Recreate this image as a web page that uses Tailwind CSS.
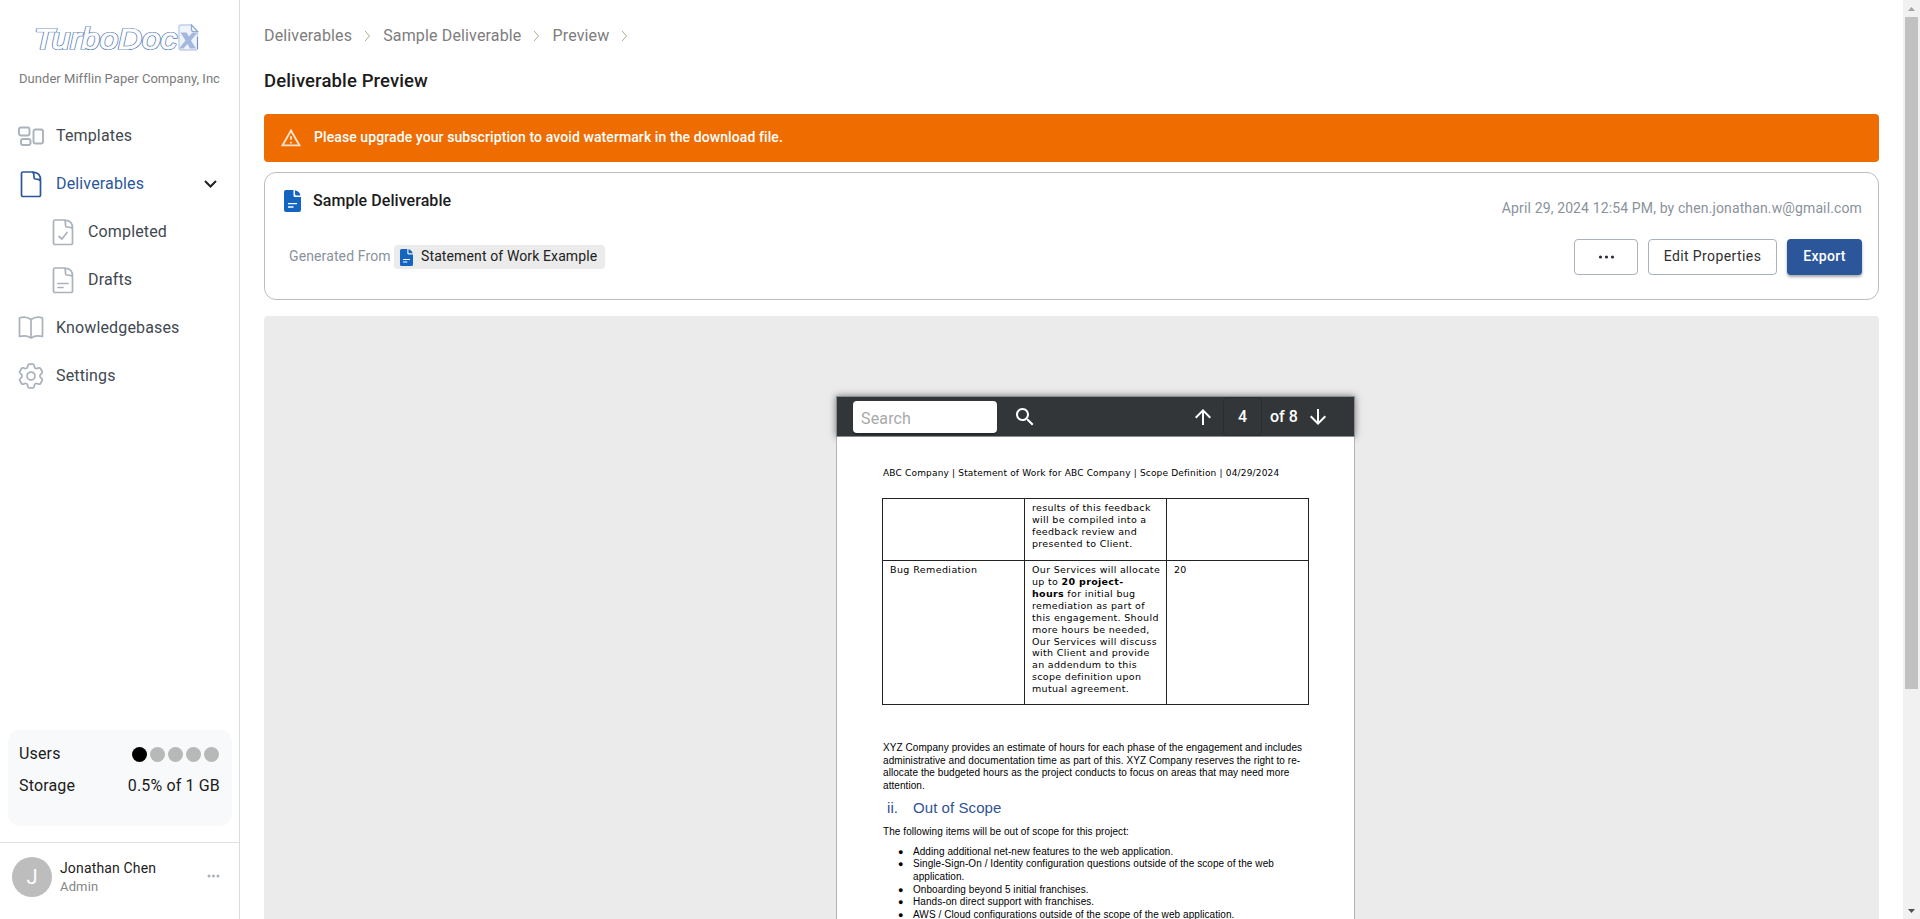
<!DOCTYPE html>
<html lang="en">
<head>
<meta charset="utf-8">
<title>Deliverable Preview</title>
<script src="https://cdn.jsdelivr.net/npm/@tailwindcss/browser@4"></script>
</head>
<body class="flex h-[919px] w-[1920px] overflow-hidden bg-white font-['Roboto',sans-serif] text-base tracking-[0.15px] text-[#1c1c1c]">

<!-- Sidebar -->
<aside class="flex w-60 shrink-0 flex-col border-r border-[#dcdcdc]">
  <div class="flex h-[60px] pt-[18px] pl-[34px]">
    <svg width="168" height="38" viewBox="0 0 168 38" fill="none">
      <text x="0" y="31" textLength="143" lengthAdjust="spacingAndGlyphs" font-family="Liberation Sans, sans-serif" font-style="italic" font-size="30" letter-spacing="0" fill="#fff" stroke="#4a72b4" stroke-width="2.2" stroke-linejoin="round">TurboDoc</text>
      <text x="0" y="31" textLength="143" lengthAdjust="spacingAndGlyphs" font-family="Liberation Sans, sans-serif" font-style="italic" font-size="30" letter-spacing="0" fill="#fff" stroke="#fff" stroke-width=".8">TurboDoc</text>
      <path d="M147 7h10.500l6 6.500V30a2 2 0 0 1-2 2H147a2 2 0 0 1-2-2V9a2 2 0 0 1 2-2z" fill="#eff3fa" stroke="#c3d0e8" stroke-width="1.400"/>
      <path d="M157.500 7v4.500a2 2 0 0 0 2 2h4z" fill="#fff" stroke="#8fa9d3" stroke-width="1.200"/>
      <path d="M146.500 14.500h6l2.500 4 3.500-4h5l-6.500 8 5 8h-6l-2.500-4.500-4 4.500h-4.500l6.500-8z" fill="#a3b8dc"/>
      <path d="M163.500 19v12" stroke="#6f8fc6"/>
    </svg>
  </div>
  <div class="mt-[9px] text-center text-[13px] leading-[20px] tracking-[0.04px] text-[#7b7b7b]">Dunder Mifflin Paper Company, Inc</div>

  <nav class="mt-[23px] flex flex-col text-[#424850]">
    <a class="flex h-12 items-center pl-[18px]">
      <svg class="mr-3 w-[26px]" width="26" height="22" viewBox="0 0 26 22" fill="none" stroke="#aab2bb" stroke-width="1.900"><rect x="1" y="2.500" width="10.500" height="8" rx="2"/><rect x="3" y="14" width="9.500" height="6" rx="2"/><rect x="15.500" y="4.500" width="9.500" height="14" rx="2"/></svg>
      Templates
    </a>
    <a class="flex h-12 items-center pl-5 text-[#2b579a]">
      <svg class="mr-[14px]" width="22" height="28" viewBox="0 0 22 28" fill="none" stroke="#2b579a" stroke-width="1.700" stroke-linejoin="round"><path d="M3 2h9.500q8.500.5 8 8.500V25a1.500 1.500 0 0 1-1.500 1.500H3A1.500 1.500 0 0 1 1.500 25V3.500A1.500 1.500 0 0 1 3 2zM12.500 2q1.500 1 1.500 4v1.500a1.500 1.500 0 0 0 1.500 1.500q4 0 5 2"/></svg>
      Deliverables
      <svg class="mr-[22px] ml-auto" width="13" height="8" viewBox="0 0 13 8" fill="none" stroke="#222" stroke-width="2"><path d="M1 1l5.500 5.500L12 1"/></svg>
    </a>
    <a class="flex h-12 items-center pl-[52px]">
      <svg class="mr-[14px]" width="22" height="28" viewBox="0 0 22 28" fill="none" stroke="#aab2bb" stroke-width="1.700" stroke-linejoin="round" stroke-linecap="round"><path d="M3 2h9.500q8.500.5 8 8.500V25a1.500 1.500 0 0 1-1.500 1.500H3A1.500 1.500 0 0 1 1.500 25V3.500A1.500 1.500 0 0 1 3 2zM12.500 2q1 1 1 4v1.500a1.500 1.500 0 0 0 1.500 1.500q4.500 0 5.500 2M7 18.500l3 2.500 5-6.500"/></svg>
      Completed
    </a>
    <a class="flex h-12 items-center pl-[52px]">
      <svg class="mr-[14px]" width="22" height="28" viewBox="0 0 22 28" fill="none" stroke="#aab2bb" stroke-width="1.700" stroke-linejoin="round" stroke-linecap="round"><path d="M3 2h9.500q8.500.5 8 8.500V25a1.500 1.500 0 0 1-1.500 1.500H3A1.500 1.500 0 0 1 1.500 25V3.500A1.500 1.500 0 0 1 3 2zM12.500 2q1 1 1 4v1.500a1.500 1.500 0 0 0 1.500 1.500q4.500 0 5.500 2M6 17.500h10M6 21.500h5"/></svg>
      Drafts
    </a>
    <a class="flex h-12 items-center pl-[18px]">
      <svg class="mr-3" width="26" height="24" viewBox="0 0 26 24" fill="none" stroke="#aab2bb" stroke-width="1.700" stroke-linejoin="round"><path d="M13 3.500Q7.500-.5 1.500 2v18.500Q8 18.500 13 22q5-3.500 11.500-1.500V2Q18.500-.5 13 3.500zV22"/></svg>
      Knowledgebases
    </a>
    <a class="flex h-12 items-center pl-[18px]">
      <svg class="mr-3" width="26" height="26" viewBox="2.200 2.200 19.600 19.600" fill="none" stroke="#aab2bb" stroke-width="1.300" stroke-linejoin="round" stroke-linecap="round"><path d="M9.594 3.940c.09-.542.56-.94 1.110-.94h2.593c.55 0 1.020.398 1.110.94l.213 1.281c.063.374.313.686.645.87.074.04.147.083.22.127.325.196.72.257 1.075.124l1.217-.456a1.125 1.125 0 0 1 1.370.49l1.296 2.247a1.125 1.125 0 0 1-.26 1.431l-1.003.827c-.293.241-.438.613-.43.992a7.723 7.723 0 0 1 0 .255c-.008.378.137.75.43.991l1.004.827c.424.35.534.955.26 1.430l-1.298 2.247a1.125 1.125 0 0 1-1.369.491l-1.217-.456c-.355-.133-.75-.072-1.076.124a6.470 6.470 0 0 1-.22.128c-.331.183-.581.495-.644.869l-.213 1.281c-.09.543-.56.94-1.110.94h-2.594c-.55 0-1.019-.398-1.110-.94l-.213-1.281c-.062-.374-.312-.686-.644-.87a6.520 6.520 0 0 1-.22-.127c-.325-.196-.72-.257-1.076-.124l-1.217.456a1.125 1.125 0 0 1-1.369-.49l-1.297-2.247a1.125 1.125 0 0 1 .26-1.431l1.004-.827c.292-.24.437-.613.43-.991a6.932 6.932 0 0 1 0-.255c.007-.38-.138-.751-.43-.992l-1.004-.827a1.125 1.125 0 0 1-.26-1.430l1.297-2.247a1.125 1.125 0 0 1 1.370-.491l1.216.456c.356.133.751.072 1.076-.124.072-.044.146-.086.22-.128.332-.183.582-.495.644-.869l.214-1.280Z"/><circle cx="12" cy="12" r="3"/></svg>
      Settings
    </a>
  </nav>

  <section class="mr-[7px] mt-auto ml-2 h-24 rounded-xl bg-[#f8f9fb] px-3 pt-2">
    <div class="-ml-px flex h-8 items-center justify-between">Users
      <div class="flex gap-[3px] pr-px">
        <i class="size-[15px] rounded-full bg-black"></i><i class="size-[15px] rounded-full bg-[#b7b8b8]"></i><i class="size-[15px] rounded-full bg-[#b7b8b8]"></i><i class="size-[15px] rounded-full bg-[#b7b8b8]"></i><i class="size-[15px] rounded-full bg-[#b7b8b8]"></i>
      </div>
    </div>
    <div class="-ml-px flex h-8 items-center justify-between">Storage<span>0.5% of 1 GB</span></div>
  </section>

  <footer class="mt-4 flex h-[77px] items-start border-t border-[#e0e0e0] pt-[14px] pl-3">
    <div class="flex size-10 items-center justify-center rounded-full bg-[#bdbdbd] text-xl text-white">J</div>
    <div class="ml-2 pt-px">
      <div class="text-sm leading-5">Jonathan Chen</div>
      <div class="text-[13px] leading-[17px] text-[#868686]">Admin</div>
    </div>
    <svg class="mt-[17px] mr-[19px] ml-auto" width="13" height="4" viewBox="0 0 13 4" fill="#aab2bb"><circle cx="2" cy="2" r="1.500"/><circle cx="6.500" cy="2" r="1.500"/><circle cx="11" cy="2" r="1.500"/></svg>
  </footer>
</aside>

<!-- Content -->
<main class="flex min-w-0 flex-1 flex-col px-6 pt-6">
  <div class="flex h-6 items-center text-[#7d7d7d]">
    <span>Deliverables</span>
    <svg class="mx-3" width="7" height="12" viewBox="0 0 7 12" fill="none" stroke="#a9ad8c"><path d="M1 1l4.500 5L1 11"/></svg>
    <span>Sample Deliverable</span>
    <svg class="mx-3" width="7" height="12" viewBox="0 0 7 12" fill="none" stroke="#a9ad8c"><path d="M1 1l4.500 5L1 11"/></svg>
    <span>Preview</span>
    <svg class="mx-3" width="7" height="12" viewBox="0 0 7 12" fill="none" stroke="#a9ad8c"><path d="M1 1l4.500 5L1 11"/></svg>
  </div>
  <h1 class="mt-[21px] text-[18.500px] leading-6 font-medium tracking-[0.12px]">Deliverable Preview</h1>

  <div class="mt-[21px] flex h-12 items-center rounded bg-[#ef6c00] pl-4 text-sm font-medium text-white">
    <svg class="mr-3" width="22" height="22" viewBox="0 0 24 24" fill="#fbe3cf"><path d="M12 5.990L19.530 19H4.470L12 5.990M12 2L1 21h22L12 2zm1 14h-2v2h2v-2zm0-6h-2v4h2v-4z"/></svg>
    <span class="pb-[2px] tracking-[0.09px]">Please upgrade your subscription to avoid watermark in the download file.</span>
  </div>

  <section class="mt-[10px] flex h-32 shrink-0 justify-between rounded-xl border border-[#bdbdbd] pr-4">
    <div class="pt-4 pl-[19px]">
      <div class="flex h-6 items-center font-medium tracking-[0.06px]">
        <svg class="mr-3" width="17" height="22" viewBox="0 0 17 22"><path d="M2 0h7.500v5.500a1.500 1.500 0 0 0 1.500 1.500h6v13a2 2 0 0 1-2 2H2a2 2 0 0 1-2-2V2a2 2 0 0 1 2-2z" fill="#1565c0"/><path d="M11 .2q4.500 1 5.500 5.300h-4q-1.500 0-1.500-1.500z" fill="#1565c0"/><path d="M4 13.700h9M4 17h5.500" stroke="#fff" stroke-width="1.300"/></svg>
        Sample Deliverable
      </div>
      <div class="mt-8 flex h-6 items-center pl-[5px] text-sm text-[#8a929c]">
        <span class="w-[105px] pb-[2px] tracking-[0.12px]">Generated From</span>
        <span class="flex h-6 w-[211px] items-center rounded bg-[#ebebeb] pl-[6px] text-[#212121]">
          <svg class="mr-2" width="13" height="17" viewBox="0 0 17 22"><path d="M2 0h7.500v5.500a1.500 1.500 0 0 0 1.500 1.500h6v13a2 2 0 0 1-2 2H2a2 2 0 0 1-2-2V2a2 2 0 0 1 2-2z" fill="#1565c0"/><path d="M11 .2q4.500 1 5.500 5.300h-4q-1.500 0-1.500-1.500z" fill="#1565c0"/><path d="M4 13.700h9M4 17h5.500" stroke="#fff" stroke-width="1.400"/></svg>
          <span class="pb-[2px] tracking-[0.12px]">Statement of Work Example</span>
        </span>
      </div>
    </div>
    <div class="flex flex-col items-end pt-[25px] text-sm">
      <div class="leading-5 tracking-[0.13px] text-[#8a929c]">April 29, 2024 12:54 PM, by chen.jonathan.w@gmail.com</div>
      <div class="mt-[21px] flex gap-[10px] tracking-[0.4px] text-[#2f2f2f]">
        <div class="flex h-9 w-16 items-center justify-center rounded border border-[#aab2bd]">
          <svg width="17" height="4" viewBox="0 0 17 4" fill="#2a2f36"><circle cx="2.500" cy="2" r="1.600"/><circle cx="8.500" cy="2" r="1.600"/><circle cx="14.500" cy="2" r="1.600"/></svg>
        </div>
        <div class="flex h-9 w-[129px] items-center justify-center rounded border border-[#aab2bd] pb-[2px]">Edit Properties</div>
        <div class="flex h-9 w-[75px] items-center justify-center rounded bg-[#2b579a] pb-[2px] font-medium tracking-[0.3px] text-white shadow-[0_2px_3px_rgba(0,0,0,0.35)]">Export</div>
      </div>
    </div>
  </section>

  <!-- Document viewer -->
  <section class="mt-4 flex min-h-0 flex-1 items-start overflow-hidden rounded-t bg-[#ebebeb] pt-20 pl-[572px]">
    <div class="w-[519px] shrink-0">
      <div class="flex h-[41px] items-center border border-[#8b8d8e] bg-[#323639] pl-4 text-white shadow-[0_0_7px_rgba(0,0,0,0.5)]">
        <div class="mt-px flex h-8 w-36 items-center rounded bg-white pt-[3px] pl-2 text-[#a9a9a9] shadow-[0_2px_1px_rgba(0,0,0,0.25)]">Search</div>
        <svg class="ml-4" width="24" height="24" viewBox="0 0 24 24" fill="#fff"><path d="M15.500 14h-.79l-.28-.27C15.410 12.590 16 11.110 16 9.500 16 5.910 13.090 3 9.500 3S3 5.910 3 9.500 5.910 16 9.500 16c1.610 0 3.090-.59 4.230-1.570l.27.28v.79l5 4.990L20.490 19l-4.990-5zm-6 0C7.010 14 5 11.990 5 9.500S7.010 5 9.500 5 14 7.010 14 9.500 11.990 14 9.500 14z"/></svg>
        <svg class="ml-[154px]" width="24" height="24" viewBox="0 0 24 24" fill="#fff"><path d="M4 12l1.410 1.410L11 7.830V20h2V7.830l5.580 5.590L20 12l-8-8-8 8z"/></svg>
        <div class="ml-2 flex h-[39px] w-[39px] items-center justify-center rounded border border-[#2a2d30] pt-px font-medium">4</div>
        <span class="ml-2 w-[33px] font-medium tracking-normal whitespace-nowrap">of 8</span>
        <svg class="ml-[3px]" width="24" height="24" viewBox="0 0 24 24" fill="#fff"><path d="M20 12l-1.410-1.410L13 16.170V4h-2v12.170l-5.580-5.590L4 12l8 8 8-8z"/></svg>
      </div>

      <article class="h-[900px] border-x border-[#b3b3b3] bg-white pt-[30px] pl-[45px] text-black">
        <div class="h-3 pl-px text-[9px] leading-3 tracking-[0.17px] whitespace-nowrap font-['DejaVu_Sans',sans-serif]">ABC Company | Statement of Work for ABC Company | Scope Definition | 04/29/2024</div>

        <div class="mt-[19px] grid w-[427px] grid-cols-[142px_142px_142px] border-t border-l border-[#222] text-[9.500px] leading-[11.920px] tracking-[0.32px] whitespace-nowrap font-['DejaVu_Sans',sans-serif]">
          <div class="h-[62px] border-r border-b border-[#222]"></div>
          <div class="border-r border-b border-[#222] pt-[3px] pl-[7px]">results of this feedback<br>will be compiled into a<br>feedback review and<br>presented to Client.</div>
          <div class="border-r border-b border-[#222]"></div>
          <div class="h-[144px] border-r border-b border-[#222] pt-[3px] pl-[7px] tracking-[0.4px]">Bug Remediation</div>
          <div class="border-r border-b border-[#222] pt-[3px] pl-[7px]">Our Services will allocate<br>up to <b>20 project-</b><br><b>hours</b> for initial bug<br>remediation as part of<br>this engagement. Should<br>more hours be needed,<br>Our Services will discuss<br>with Client and provide<br>an addendum to this<br>scope definition upon<br>mutual agreement.</div>
          <div class="border-r border-b border-[#222] pt-[3px] pl-[7px]">20</div>
        </div>

        <div class="mt-[37px] pl-px text-[10px] leading-[12.700px] tracking-[0.07px] whitespace-nowrap font-['Liberation_Sans',sans-serif]">
          <p>XYZ Company provides an estimate of hours for each phase of the engagement and includes<br>administrative and documentation time as part of this. XYZ Company reserves the right to re-<br>allocate the budgeted hours as the project conducts to focus on areas that may need more<br>attention.</p>
          <h2 class="mt-[6px] flex h-5 items-center pl-1 text-[15px] tracking-[0.07px] text-[#2f5496]"><span class="w-[26px]">ii.</span>Out of Scope</h2>
          <p class="mt-[7px]">The following items will be out of scope for this project:</p>
          <ul class="mt-[7px]">
            <li class="flex"><span class="w-[30px] pl-[15px] text-[9px]">●</span>Adding additional net-new features to the web application.</li>
            <li class="flex"><span class="w-[30px] pl-[15px] text-[9px]">●</span><span>Single-Sign-On / Identity configuration questions outside of the scope of the web<br>application.</span></li>
            <li class="flex"><span class="w-[30px] pl-[15px] text-[9px]">●</span>Onboarding beyond 5 initial franchises.</li>
            <li class="flex"><span class="w-[30px] pl-[15px] text-[9px]">●</span>Hands-on direct support with franchises.</li>
            <li class="flex"><span class="w-[30px] pl-[15px] text-[9px]">●</span>AWS / Cloud configurations outside of the scope of the web application.</li>
          </ul>
        </div>
      </article>
    </div>
  </section>
</main>

<!-- Page scrollbar -->
<div class="flex w-[17px] shrink-0 flex-col items-center bg-[#f1f1f1]">
  <div class="flex h-[17px] items-center"><svg width="7" height="4" viewBox="0 0 7 4" fill="#a3a3a3"><path d="M0 4L3.500 0 7 4z"/></svg></div>
  <div class="h-[672px] w-[13px] bg-[#c1c1c1]"></div>
  <div class="mt-auto flex h-[17px] items-center"><svg width="7" height="4" viewBox="0 0 7 4" fill="#505050"><path d="M0 0h7L3.500 4z"/></svg></div>
</div>
</body>
</html>
